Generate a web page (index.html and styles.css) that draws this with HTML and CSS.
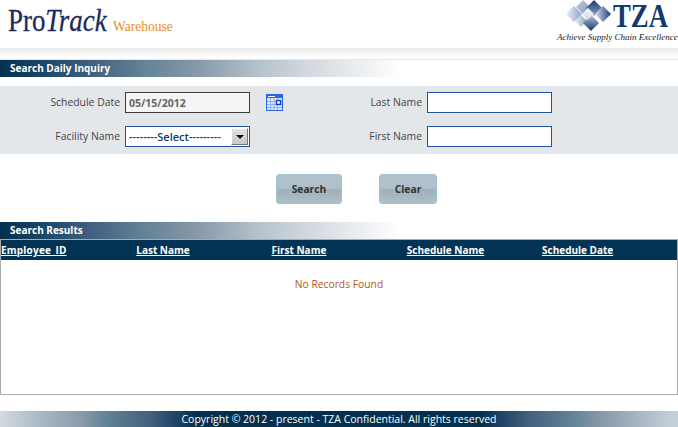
FILE: index.html
```html
<!DOCTYPE html>
<html lang="en">
<head>
<meta charset="utf-8">
<title>ProTrack Warehouse</title>
<link rel="stylesheet" href="styles.css">
</head>
<body>
<header class="top">
  <div class="brand"><span class="pro">Pro<i>Track</i></span><span class="wh">Warehouse</span></div>
  <div class="tza">
    <div class="tza-row">
      <svg class="diamonds" width="45" height="32" viewBox="0 0 45 32" aria-hidden="true">
        <defs>
          <linearGradient id="dtop" x1="0" y1="0" x2="0" y2="1">
            <stop offset="0" stop-color="#17386c"/>
            <stop offset="1" stop-color="#8ea3c4"/>
          </linearGradient>
          <linearGradient id="dl" x1="0" y1="0" x2="1" y2="0">
            <stop offset="0" stop-color="#e9edf3"/>
            <stop offset="1" stop-color="#8fa3c4"/>
          </linearGradient>
          <linearGradient id="dtl" x1="0" y1="0" x2="1" y2="1">
            <stop offset="0" stop-color="#c3cfe0"/>
            <stop offset="1" stop-color="#7e95ba"/>
          </linearGradient>
          <linearGradient id="dr" x1="0" y1="0" x2="1" y2="0">
            <stop offset="0" stop-color="#dbe2ed"/>
            <stop offset="1" stop-color="#1a3e76"/>
          </linearGradient>
          <linearGradient id="db" x1="0" y1="0" x2="0" y2="1">
            <stop offset="0" stop-color="#b4c2d7"/>
            <stop offset="1" stop-color="#17386c"/>
          </linearGradient>
          <linearGradient id="dc" x1="0" y1="0" x2="0" y2="1">
            <stop offset="0" stop-color="#ffffff"/>
            <stop offset="1" stop-color="#c9d4e4"/>
          </linearGradient>
        </defs>
        <polygon points="8,6 16,14 8,22 0,14" fill="url(#dl)"/>
        <polygon points="17,0 24,7 17,14 10,7" fill="url(#dtl)"/>
        <polygon points="28,0 36,8 28,16 20,8" fill="url(#dtop)"/>
        <polygon points="37,6 45,14 37,22 29,14" fill="url(#dr)"/>
        <polygon points="15,15 21,21 15,27 9,21" fill="url(#dl)"/>
        <polygon points="25,15 33,23 25,31 17,23" fill="url(#db)"/>
        <polygon points="22,8 28,14 22,20 16,14" fill="url(#dc)"/>
      </svg>
      <span class="tza-name">TZA</span>
    </div>
    <div class="tagline">Achieve Supply Chain Excellence</div>
  </div>
</header>
<div class="shade"></div>
<h2 class="bar">Search Daily Inquiry</h2>
<form class="panel">
  <label class="lbl">Schedule Date</label>
  <div class="date-cell">
    <input class="field field-date" type="text" value="05/15/2012" readonly>
    <svg class="cal" width="17" height="17" viewBox="0 0 17 17" aria-hidden="true">
      <rect x="0.5" y="0.5" width="16" height="16" fill="#dbe6ff" stroke="#2a62e8"/>
      <rect x="1" y="1" width="15" height="3" fill="#2a62e8"/>
      <rect x="2" y="2" width="7" height="1" fill="#fff"/>
      <path d="M1 7.5H16M1 10.5H16M1 13.5H16M4.5 4V16M8 4V16M11.5 4V16" stroke="#8fb0f5" stroke-width="1"/>
      <rect x="10.5" y="6.5" width="4" height="4" fill="#fff" stroke="#1240c8" stroke-width="1.4"/>
    </svg>
  </div>
  <label class="lbl">Last Name</label>
  <input class="field" type="text">
  <label class="lbl">Facility Name</label>
  <div class="select">
    <span class="select-text">--------Select---------</span>
    <span class="select-btn"><span class="arrow"></span></span>
  </div>
  <label class="lbl">First Name</label>
  <input class="field" type="text">
</form>
<div class="actions">
  <button class="btn btn-search" type="button">Search</button>
  <button class="btn btn-clear" type="button">Clear</button>
</div>
<h2 class="bar bar-results">Search Results</h2>
<section class="results">
  <div class="thead">
    <a class="col-id">Employee_ID</a><a>Last Name</a><a>First Name</a><a>Schedule Name</a><a>Schedule Date</a>
  </div>
  <p class="empty">No Records Found</p>
</section>
<footer class="foot">Copyright © 2012 - present - TZA Confidential. All rights reserved</footer>
</body>
</html>
```
FILE: styles.css
```css
* { box-sizing: border-box; }
html, body { margin: 0; padding: 0; }
body {
  width: 678px;
  height: 427px;
  overflow: hidden;
  background: #fff;
  font-family: "Open Sans", "Noto Sans", sans-serif;
  font-size: 11px;
  color: #333;
}
.top {
  height: 48px;
  display: flex;
  justify-content: space-between;
  align-items: flex-start;
}
.brand {
  padding: 2px 0 0 8px;
  display: flex;
  align-items: baseline;
  font-family: "Liberation Serif", serif;
}
.pro {
  display: inline-block;
  width: 105px;
  font-size: 32px;
  line-height: 36px;
  color: #1c2a5a;
  -webkit-text-stroke: 0.3px #1c2a5a;
  white-space: nowrap;
  transform: scaleX(0.84);
  transform-origin: left center;
}
.wh {
  display: inline-block;
  width: 62px;
  font-size: 15px;
  color: #f08a1e;
  white-space: nowrap;
  transform: scaleX(0.9);
  transform-origin: left center;
}
.tza { width: 122px; flex: none; }
.tza-row { display: flex; align-items: flex-start; height: 31px; padding-left: 10px; }
.diamonds { flex: none; }
.tza-name {
  flex: none;
  display: inline-block;
  width: 68px;
  font-family: "Liberation Serif", serif;
  font-weight: 700;
  font-size: 33px;
  line-height: 33px;
  margin-left: -11px;
  color: #123a70;
  text-align: right;
  transform: scaleX(0.81);
  transform-origin: right center;
}
.tagline {
  font-family: "Liberation Serif", serif;
  font-style: italic;
  font-size: 9px;
  line-height: 11px;
  margin-top: 1px;
  margin-left: 1px;
  color: #222;
  white-space: nowrap;
}
.shade {
  height: 12px;
  background: linear-gradient(#ececec, #fff 90%);
  border-bottom: 1px solid #e6e6e6;
}
.bar {
  margin: 0;
  width: 400px;
  height: 17px;
  padding-left: 10px;
  font-size: 10px;
  font-weight: 700;
  line-height: 16px;
  color: #fff;
  background: linear-gradient(90deg, #03304f 0, #1d4a6b 12%, #43607f 23%, #5f8194 35%, #8a9aab 50%, #b6c3cc 65%, #d8dde3 80%, #fff 100%);
}
.panel {
  margin-top: 9px;
  height: 68px;
  background: #e4e7ea;
  display: grid;
  grid-template-columns: 120px 172px 120px 125px;
  grid-template-rows: 21px 21px;
  row-gap: 13px;
  column-gap: 5px;
  padding-top: 6px;
  align-items: center;
}
.lbl { text-align: right; font-size: 10.4px; line-height: 20px; height: 21px; color: #444; }
.date-cell { display: flex; align-items: center; gap: 16px; }
.field {
  width: 125px;
  height: 21px;
  margin: 0;
  padding: 0 3px;
  border: 1px solid #1f5597;
  background: #fff;
  font: 11px "Open Sans", sans-serif;
  border-radius: 0;
  outline: none;
}
.field-date {
  flex: none;
  border-color: #3c3c3c;
  background: #f5f5f5;
  color: #666;
  font-size: 10.5px;
  font-weight: 700;
}
.cal { flex: none; }
.select {
  width: 125px;
  height: 21px;
  border: 1px solid #1f5597;
  background: #fff;
  display: flex;
  align-items: center;
  justify-content: space-between;
}
.select-text { padding: 0 0 1px 3px; font-size: 11px; font-weight: 600; color: #0d3f6b; white-space: nowrap; }
.select-btn {
  width: 17px;
  height: 17px;
  margin-right: 1px;
  border: 1px solid #8a8a8a;
  border-color: #fff #777 #777 #fff;
  background: linear-gradient(#e2e2e2, #c8c8c8);
  display: flex;
  align-items: center;
  justify-content: center;
}
.arrow {
  width: 0;
  height: 0;
  border-left: 4px solid transparent;
  border-right: 4px solid transparent;
  border-top: 4px solid #111;
}
.actions {
  height: 68px;
  padding: 20px 0 0 276px;
  display: flex;
  align-items: flex-start;
  gap: 37px;
}
.btn {
  height: 30px;
  padding: 0;
  border: 1px solid #9cc3cf;
  border-radius: 3px;
  background: linear-gradient(#b3c3cd 0, #afbfc9 48%, #9eb1bc 52%, #adbfc8 100%);
  font: 700 10.3px "Open Sans", sans-serif;
  color: #333;
}
.btn-search { width: 66px; }
.btn-clear { width: 58px; }
.results {
  width: 678px;
  height: 156px;
  border: 1px solid #aaa;
}
.thead {
  height: 20px;
  background: #033354;
  display: grid;
  grid-template-columns: repeat(5, 135.25px);
  line-height: 20px;
}
.thead a {
  color: #fff;
  font-size: 10px;
  font-weight: 700;
  text-decoration: underline;
}
.thead .col-id { letter-spacing: 0.2px; }
.empty {
  margin: 17px 0 0;
  text-align: center;
  font-size: 10.3px;
  line-height: 15px;
  color: #b5561a;
}
.foot {
  margin-top: 16px;
  height: 16px;
  line-height: 16px;
  text-align: center;
  font-size: 10.5px;
  color: #fff;
  background: linear-gradient(90deg, #d4dae0 0, #a9b8c3 6%, #8a9aab 12%, #5f8194 16%, #43607f 22%, #03304f 29%, #03304f 71%, #43607f 78%, #5f8194 84%, #8a9aab 89%, #c4ced8 99%);
}
```
